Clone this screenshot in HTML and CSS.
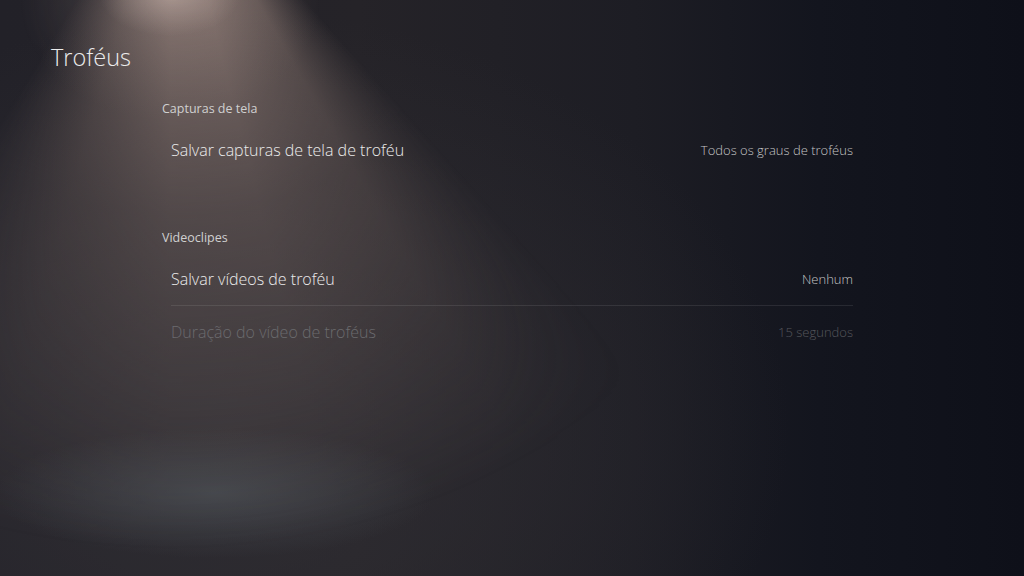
FILE: index.html
```html
<!DOCTYPE html>
<html lang="pt-BR">
<head>
<meta charset="utf-8">
<title>Troféus</title>
<link rel="stylesheet" href="styles.css">
</head>
<body>
<div class="screen">
  <h1 class="title">Troféus</h1>
  <div class="content">
    <section class="group">
      <div class="group-label">Capturas de tela</div>
      <div class="row">
        <span class="row-name">Salvar capturas de tela de troféu</span>
        <span class="row-value">Todos os graus de troféus</span>
      </div>
    </section>
    <section class="group">
      <div class="group-label">Videoclipes</div>
      <div class="row">
        <span class="row-name">Salvar vídeos de troféu</span>
        <span class="row-value">Nenhum</span>
      </div>
      <div class="row disabled">
        <span class="row-name">Duração do vídeo de troféus</span>
        <span class="row-value">15 segundos</span>
      </div>
    </section>
  </div>
</div>
</body>
</html>
```
FILE: styles.css
```css
html, body {
  margin: 0;
  padding: 0;
  background: #10121b;
}
.screen {
  position: relative;
  isolation: isolate;
  width: 1024px;
  height: 576px;
  overflow: hidden;
  box-sizing: border-box;
  font-family: "Open Sans", "Liberation Sans", sans-serif;
  font-weight: 300;
  color: #e6e6e6;
  padding: 41px 0 0 51px;
  background:
    radial-gradient(ellipse 220px 65px at 215px 493px, rgba(76,82,88,0.65), rgba(76,82,88,0) 100%),
    radial-gradient(ellipse 560px 420px at 230px 430px, rgba(50,48,53,0.85), rgba(50,48,53,0) 100%),
    linear-gradient(90deg, #222128 0%, #252328 35%, #1d1d24 62%, #13151e 80%, #0e1019 100%);
}
.screen::before {
  content: "";
  position: absolute;
  inset: 0;
  z-index: -1;
  background:
    radial-gradient(ellipse 70px 40px at 170px -4px, rgba(205,185,177,0.5), rgba(205,185,177,0) 100%),
    radial-gradient(ellipse 150px 120px at 170px 0px, rgba(160,140,133,0.4), rgba(160,140,133,0) 100%),
    conic-gradient(from 0deg at 170px -150px,
      rgba(132,114,108,0) 138deg,
      rgba(132,114,108,0.7) 150deg,
      rgba(140,121,115,0.92) 166deg,
      rgba(140,121,115,0.9) 180deg,
      rgba(132,114,108,0.6) 196deg,
      rgba(132,114,108,0) 212deg);
  -webkit-mask-image: radial-gradient(ellipse 720px 700px at 170px -150px, #000 18%, rgba(0,0,0,0.45) 52%, rgba(0,0,0,0) 100%);
  mask-image: radial-gradient(ellipse 720px 700px at 170px -150px, #000 18%, rgba(0,0,0,0.45) 52%, rgba(0,0,0,0) 100%);
}
.title {
  margin: 0;
  font-size: 23.5px;
  font-weight: 300;
  line-height: 32px;
  color: #ececec;
}
.content {
  margin: 26px 0 0 111px;
  width: 691px;
  display: flex;
  flex-direction: column;
  gap: 52px;
}
.group-label {
  font-size: 12.5px;
  line-height: 20px;
  color: #d0d0d0;
  font-weight: 400;
  margin-bottom: 5px;
}
.row {
  display: flex;
  justify-content: space-between;
  align-items: center;
  height: 52px;
  margin-left: 9px;
}
.row + .row {
  border-top: 1px solid rgba(255,255,255,0.09);
}
.row-name {
  font-size: 16px;
  color: #ebebeb;
}
.row-value {
  font-size: 13px;
  color: #c4c4c4;
}
.row.disabled .row-name {
  color: #6b6b6e;
}
.row.disabled .row-value {
  color: #55565c;
}
```
